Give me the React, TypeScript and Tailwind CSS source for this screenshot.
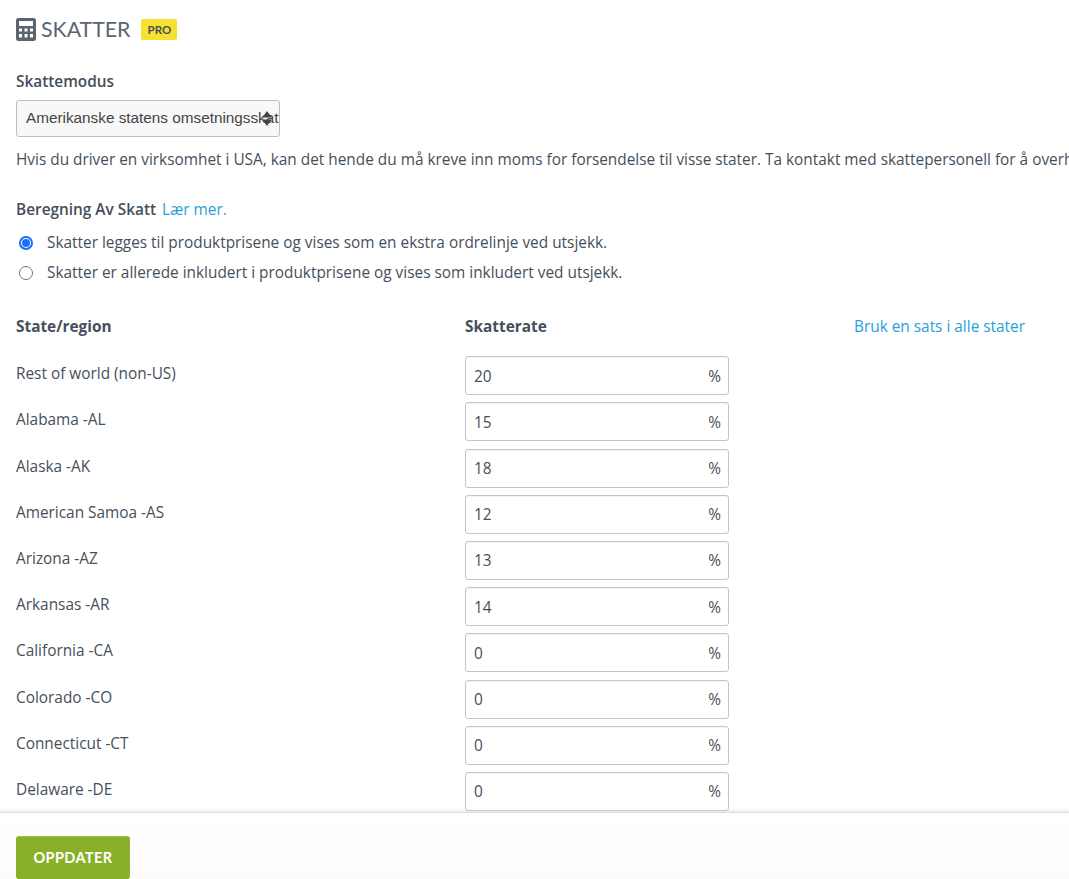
const rows: [string, string][] = [
  ["Rest of world (non-US)", "20"],
  ["Alabama -AL", "15"],
  ["Alaska -AK", "18"],
  ["American Samoa -AS", "12"],
  ["Arizona -AZ", "13"],
  ["Arkansas -AR", "14"],
  ["California -CA", "0"],
  ["Colorado -CO", "0"],
  ["Connecticut -CT", "0"],
  ["Delaware -DE", "0"],
];

function Radio({ checked }: { checked?: boolean }) {
  return checked ? (
    <span className="w-[14px] h-[14px] rounded-full border-2 border-[#1a6ff5] flex items-center justify-center shrink-0">
      <span className="w-[8px] h-[8px] rounded-full bg-[#1a6ff5]" />
    </span>
  ) : (
    <span className="w-[14px] h-[14px] rounded-full border border-[#767676] bg-white shrink-0" />
  );
}

export default function App() {
  return (
    <div className="relative w-[1069px] h-[879px] overflow-hidden bg-white text-[#454f5b] text-[15.39px] font-['Open_Sans',sans-serif]">
      <div className="h-[812px] overflow-hidden pl-[16px] pt-[16px]">
        <div className="flex items-center h-[27px]">
          <svg width="20" height="23" viewBox="0 0 20 23" className="shrink-0">
            <path fillRule="evenodd" fill="#5a6570" d="M2.5 0h15A2.5 2.5 0 0 1 20 2.500v18a2.500 2.500 0 0 1-2.500 2.500h-15A2.500 2.500 0 0 1 0 20.500v-18A2.500 2.500 0 0 1 2.500 0ZM3 3v5h14V3ZM3 10.500v3h3v-3Zm5.500 0v3h3v-3Zm5.500 0v3h3v-3ZM3 16v3.500h3V16Zm5.500 0v3.500h3V16Zm5.500 0v3.500h3V16Z" />
          </svg>
          <span className="ml-[5px] text-[21.3px] leading-[27px] text-[#5a6570] font-['Lato',sans-serif]">SKATTER</span>
          <span className="ml-[11px] w-[36px] h-[21px] rounded-[2px] bg-[#f5e130] text-[#454f5b] text-[11.5px] font-bold flex items-center justify-center font-['Lato',sans-serif]">PRO</span>
        </div>
        <div className="mt-[29px] font-semibold leading-[20px]">Skattemodus</div>
        <div className="mt-[8px] w-[264px] h-[37px] rounded-[3px] border border-[#bdbfc7] bg-[#f8f8f8] relative overflow-hidden flex items-center pl-[9px] whitespace-nowrap text-[15.3px] text-[#444] font-['Liberation_Sans',sans-serif]">
          Amerikanske statens omsetningsskatt
          <svg width="10" height="15" viewBox="0 0 10 16" className="absolute left-[245px] top-[10px]">
            <path d="M5 0 10 7H0ZM5 16 0 9h10Z" fill="#444" />
          </svg>
        </div>
        <p className="mt-[13px] leading-[20px] whitespace-nowrap">Hvis du driver en virksomhet i USA, kan det hende du må kreve inn moms for forsendelse til visse stater. Ta kontakt med skattepersonell for å overholde reglene.</p>
        <div className="mt-[30px] leading-[20px]"><span className="font-semibold">Beregning Av Skatt</span><a className="ml-[6px] text-[#2a9fd6]">Lær mer.</a></div>
        <div className="mt-[13px] flex items-center h-[20px] pl-[3px]"><Radio checked /><span className="ml-[14px]">Skatter legges til produktprisene og vises som en ekstra ordrelinje ved utsjekk.</span></div>
        <div className="mt-[10px] flex items-center h-[20px] pl-[3px]"><Radio /><span className="ml-[14px]">Skatter er allerede inkludert i produktprisene og vises som inkludert ved utsjekk.</span></div>
        <div className="mt-[34px] flex h-[20px] leading-[20px] mb-[19.2px]">
          <span className="w-[449px] font-bold">State/region</span>
          <span className="w-[389px] font-bold">Skatterate</span>
          <a className="text-[#2a9fd6]">Bruk en sats i alle stater</a>
        </div>
        <div className="flex flex-col gap-[7.2px]">
          {rows.map(([name, value]) => (
            <div key={name} className="flex h-[39px]">
              <span className="w-[449px] leading-[20px] pt-[8px]">{name}</span>
              <div className="w-[264px] h-[39px] rounded-[3px] border border-[#c4c5cc] bg-white flex items-center justify-between pl-[8px] pr-[7px] pt-[1px] shadow-[inset_0_1px_1px_rgba(0,0,0,0.05)]">
                <span>{value}</span>
                <span>%</span>
              </div>
            </div>
          ))}
        </div>
      </div>
      <div className="h-[67px] border-t border-[#ddd] shadow-[0_-2px_3px_rgba(0,0,0,0.08)] bg-gradient-to-b from-white to-[#fcfcfc] pl-[16px] pt-[23px]">
        <div className="w-[114px] h-[43px] rounded-[3px] bg-[#8ab02a] border-t border-[#a0c243] text-white text-[14.5px] font-bold flex items-center justify-center font-['Lato',sans-serif] tracking-[0.4px]">OPPDATER</div>
      </div>
    </div>
  );
}
